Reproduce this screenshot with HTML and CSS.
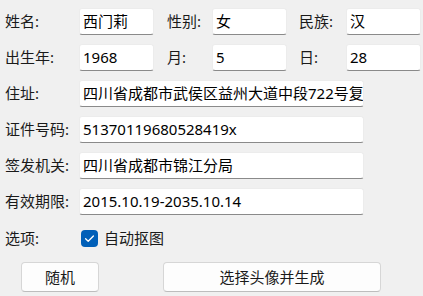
FILE: index.html
```html
<!DOCTYPE html>
<html lang="zh">
<head>
<meta charset="utf-8">
<link rel="stylesheet" href="styles.css">
</head>
<body>
<div class="form">
  <div class="row">
    <span class="lbl">姓名:</span>
    <div class="inp short">西门莉</div>
    <span class="lbl mid">性别:</span>
    <div class="inp short">女</div>
    <span class="lbl end">民族:</span>
    <div class="inp short">汉</div>
  </div>
  <div class="row">
    <span class="lbl">出生年:</span>
    <div class="inp short">1968</div>
    <span class="lbl mid">月:</span>
    <div class="inp short">5</div>
    <span class="lbl end">日:</span>
    <div class="inp short">28</div>
  </div>
  <div class="row">
    <span class="lbl">住址:</span>
    <div class="inp wide">四川省成都市武侯区益州大道中段722号复</div>
  </div>
  <div class="row">
    <span class="lbl">证件号码:</span>
    <div class="inp wide">51370119680528419x</div>
  </div>
  <div class="row">
    <span class="lbl">签发机关:</span>
    <div class="inp wide">四川省成都市锦江分局</div>
  </div>
  <div class="row">
    <span class="lbl">有效期限:</span>
    <div class="inp wide">2015.10.19-2035.10.14</div>
  </div>
  <div class="row opt">
    <span class="lbl">选项:</span>
    <span class="check">
      <svg width="17" height="17" viewBox="0 0 17 17"><rect x="0" y="0" width="17" height="17" rx="4" fill="#005fb8"/><path d="M4.6 8.8 L7.2 11.3 L12.4 6" fill="none" stroke="#fff" stroke-width="1.3" stroke-linecap="round" stroke-linejoin="round"/></svg>
    </span>
    <span class="check-text">自动抠图</span>
  </div>
  <div class="buttons">
    <div class="btn b1">随机</div>
    <div class="btn b2">选择头像并生成</div>
  </div>
</div>
</body>
</html>
```
FILE: styles.css
```css
html, body {
  margin: 0;
  padding: 0;
  background: #f0f0f0;
}
body {
  width: 423px;
  height: 296px;
  overflow: hidden;
  font-family: "Noto Sans", "Noto Sans CJK SC", sans-serif;
  font-size: 15px;
  color: #1a1a1a;
}
.form {
  padding: 8px 0 0 5px;
  display: flex;
  flex-direction: column;
  gap: 9px;
}
.row {
  display: flex;
  align-items: center;
  height: 27px;
}
.lbl {
  width: 74px;
  flex: none;
  white-space: nowrap;
  line-height: 27px;
}
.lbl.mid {
  width: 45px;
  margin-left: 13px;
}
.lbl.end {
  width: 47px;
  margin-left: 12px;
}
.inp {
  box-sizing: border-box;
  height: 27px;
  background: #ffffff;
  border: 1px solid #ececec;
  border-bottom: 1px solid #8a8a8a;
  border-radius: 3px;
  padding: 0 3px;
  line-height: 25px;
  white-space: nowrap;
  overflow: hidden;
  color: #000;
  flex: none;
}
.inp.short { width: 75px; }
.inp.wide { width: 285px; }
.row.opt {
  margin-top: 1px;
}
.check {
  display: flex;
  width: 17px;
  height: 17px;
  margin-left: 2px;
}
.check-text {
  margin-left: 6px;
  line-height: 27px;
}
.buttons {
  display: flex;
  margin-top: 1px;
  padding-left: 16px;
}
.btn {
  box-sizing: border-box;
  height: 30px;
  background: #fdfdfd;
  border: 1px solid #d6d6d6;
  border-bottom-color: #bdbdbd;
  border-radius: 4px;
  text-align: center;
  line-height: 28px;
  color: #1a1a1a;
}
.b1 { width: 78px; }
.b2 { width: 218px; margin-left: 64px; }
```
